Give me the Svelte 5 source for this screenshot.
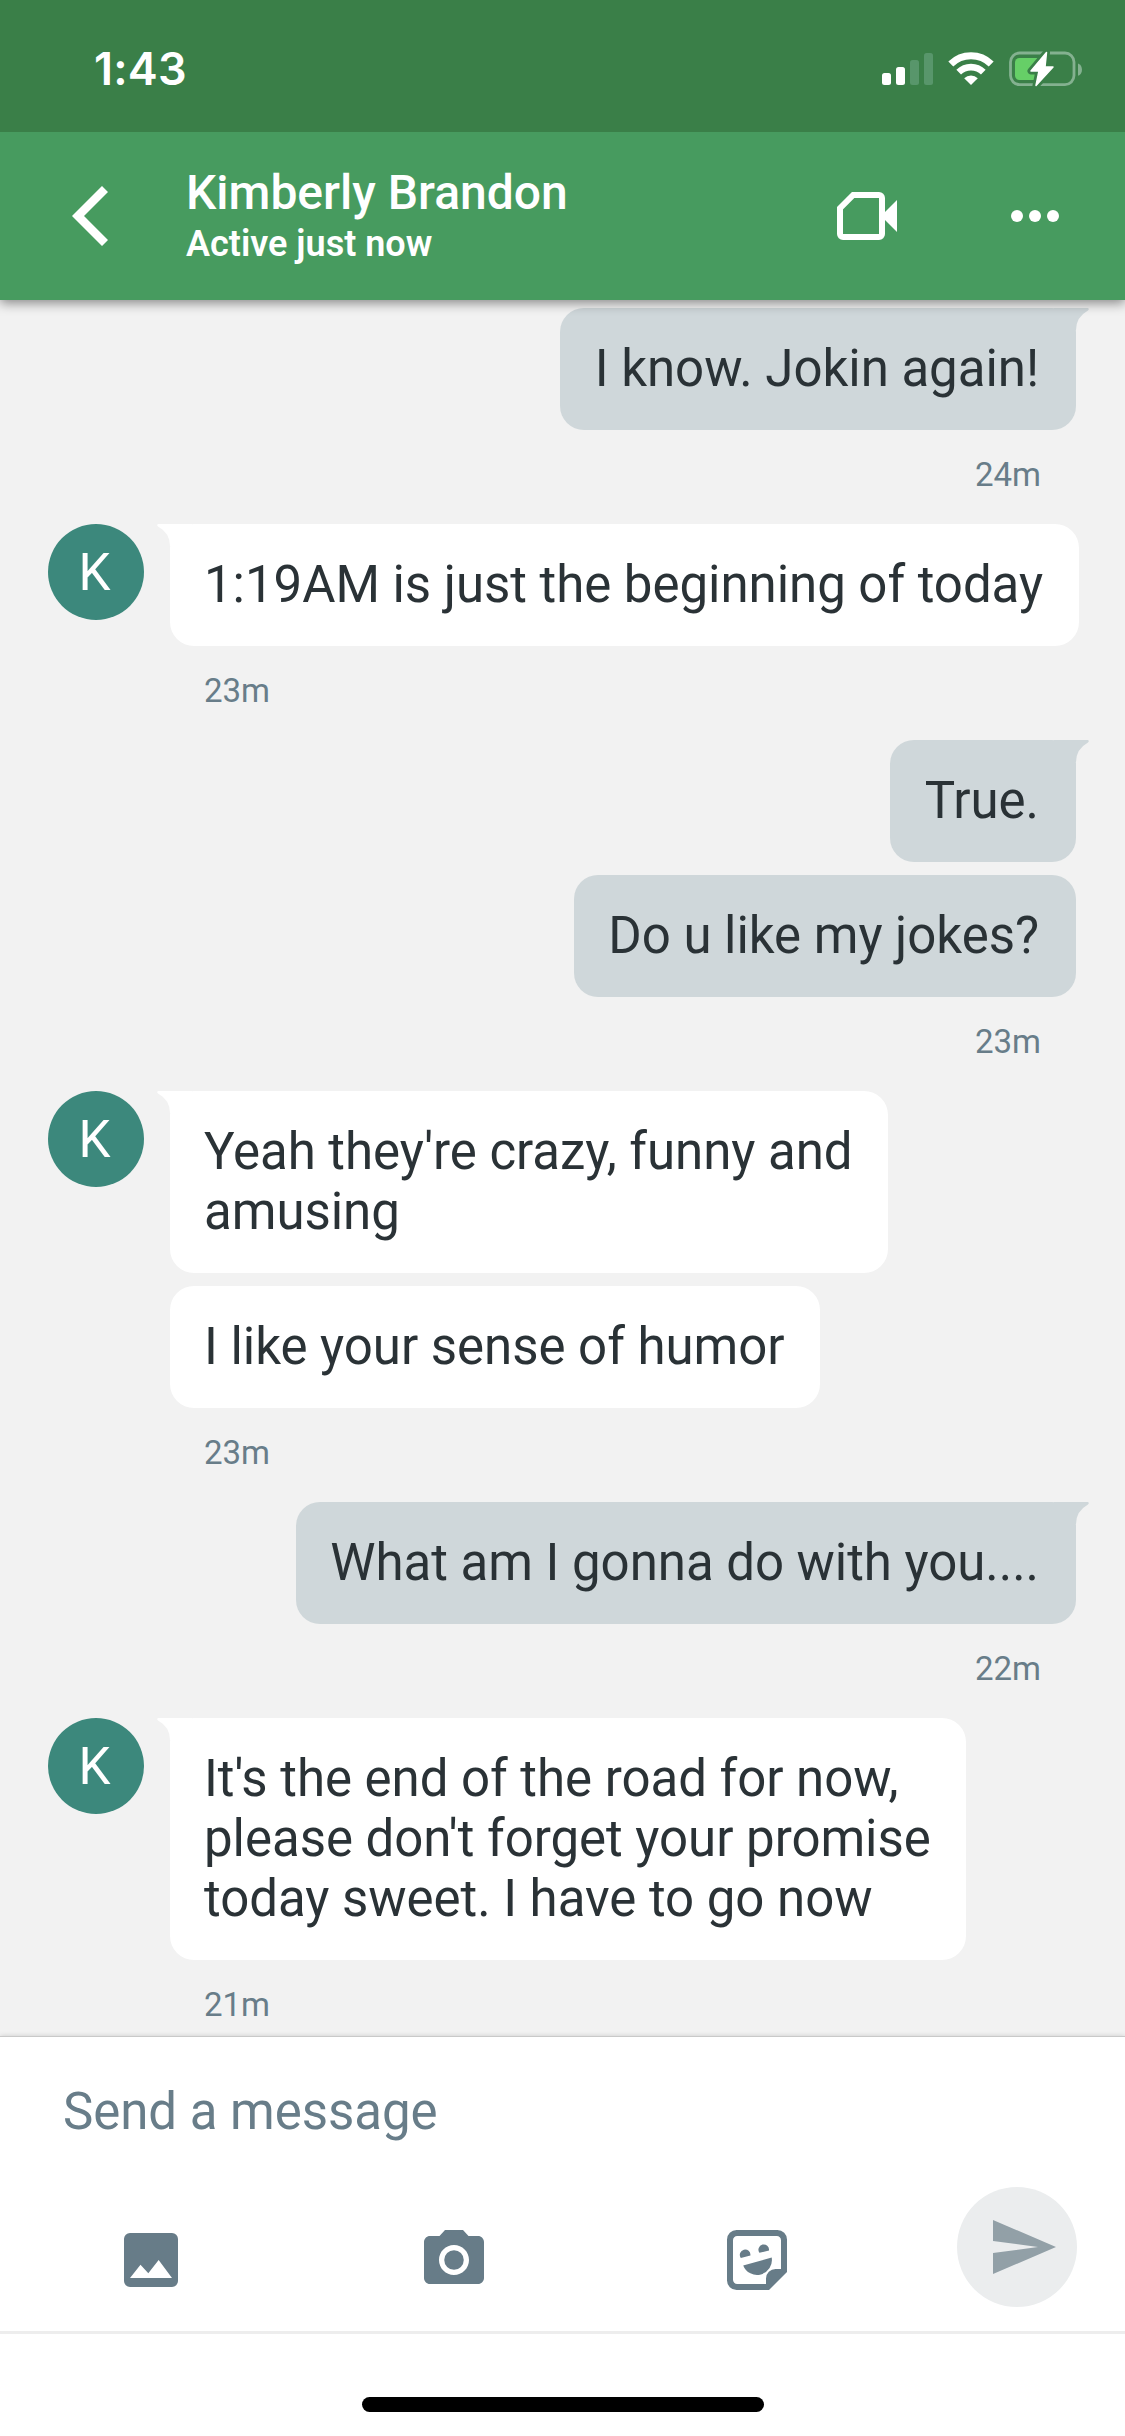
<script lang="ts">
	type Group = {
		mine: boolean;
		time: string;
		messages: string[];
	};

	const contact = { name: 'Kimberly Brandon', status: 'Active just now', initial: 'K' };

	const groups: Group[] = [
		{ mine: true, time: '24m', messages: ['I know. Jokin again!'] },
		{ mine: false, time: '23m', messages: ['1:19AM is just the beginning of today'] },
		{ mine: true, time: '23m', messages: ['True.', 'Do u like my jokes?'] },
		{
			mine: false,
			time: '23m',
			messages: ["Yeah they're crazy, funny and\namusing", 'I like your sense of humor']
		},
		{ mine: true, time: '22m', messages: ['What am I gonna do with you....'] },
		{
			mine: false,
			time: '21m',
			messages: [
				"It's the end of the road for now,\nplease don't forget your promise\ntoday sweet. I have to go now"
			]
		}
	];
</script>

<div class="screen">
	<div class="status">
		<span class="clock">1:43</span>
		<div class="indicators">
			<svg class="signal" width="51" height="32" viewBox="0 0 51 32" fill="#fff">
				<rect x="0" y="20" width="9" height="12" rx="2.5" />
				<rect x="14" y="14" width="9" height="18" rx="2.5" />
				<rect x="28" y="7" width="9" height="25" rx="2.5" fill="#58966b" />
				<rect x="42" y="0" width="9" height="32" rx="2.5" fill="#58966b" />
			</svg>
			<svg class="wifi" width="46" height="33" viewBox="0 0 46 33" fill="none" stroke="#fff">
				<path d="M2.8 12.1A28.8 28.8 0 0 1 43.2 12.1" stroke-width="7" />
				<path d="M10.7 20.2A17.4 17.4 0 0 1 35.3 20.2" stroke-width="6.6" />
				<path d="M16.2 26.3A9.8 9.8 0 0 1 29.8 26.3L23 33Z" fill="#fff" stroke="none" />
			</svg>
			<svg class="battery" width="74" height="36" viewBox="0 0 74 36">
				<rect x="1.5" y="2" width="63.5" height="31.6" rx="9" fill="none" stroke="#84b190" stroke-width="2.8" />
				<path d="M69 12.6c5.3 1.6 5.3 10.6 0 12.2z" fill="#84b190" />
				<rect x="6" y="7" width="28" height="22" rx="4.5" fill="#66cf67" />
				<path
					d="M37.5 1.5L22 20h8l-3 14.5L44 16h-8z"
					fill="#fff"
					stroke="#3a7f48"
					stroke-width="7"
					stroke-linejoin="round"
				/>
				<path
					d="M37.5 1.5L22 20h8l-3 14.5L44 16h-8z"
					fill="#fff"
					stroke="#fff"
					stroke-width="1.5"
					stroke-linejoin="round"
				/>
			</svg>
		</div>
	</div>

	<header>
		<svg class="back" width="36" height="60" viewBox="0 0 36 60" fill="none" stroke="#fff" stroke-width="8.5">
			<path d="M33 3L6 30l27 27" />
		</svg>
		<div class="contact">
			<h1>{contact.name}</h1>
			<p>{contact.status}</p>
		</div>
		<svg class="video" width="60" height="48" viewBox="0 0 60 48">
			<path
				d="M16.2 3H42a3 3 0 0 1 3 3v36a3 3 0 0 1-3 3H6a3 3 0 0 1-3-3V16.2z"
				fill="none"
				stroke="#fff"
				stroke-width="6"
			/>
			<path d="M48 20L60 8v32L48 28z" fill="#fff" />
		</svg>
		<svg class="more" width="48" height="12" viewBox="0 0 48 12" fill="#fff">
			<circle cx="6" cy="6" r="6" />
			<circle cx="24" cy="6" r="6" />
			<circle cx="42" cy="6" r="6" />
		</svg>
	</header>

	<main>
		{#each groups as group, g (g)}
			<section class="group" class:mine={group.mine}>
				{#if !group.mine}
					<div class="avatar">{contact.initial}</div>
				{/if}
				<div class="stack">
					{#each group.messages as message, i (i)}
						<div class="bubble">
							{#if i === 0}
								<svg class="tail" width="36" height="22" viewBox="0 0 36 22">
									<path d="M0 0H34.2Q35.6 1.2 34 2.4Q22 9 22 22H0z" />
								</svg>
							{/if}
							<div class="text">{message}</div>
						</div>
					{/each}
					<time>{group.time}</time>
				</div>
			</section>
		{/each}
	</main>

	<footer>
		<div class="placeholder">Send a message</div>
		<div class="tools">
			<svg width="72" height="72" viewBox="0 0 24 24">
				<path
					d="M5 3h14a2 2 0 0 1 2 2v14a2 2 0 0 1-2 2H5a2 2 0 0 1-2-2V5a2 2 0 0 1 2-2zM5 18h14l-4.45-6-3.45 4.4-2.6-2.85z"
					fill-rule="evenodd"
				/>
			</svg>
			<svg width="72" height="72" viewBox="0 0 24 24">
				<circle cx="12" cy="12" r="3.25" />
				<path
					d="M9 2L7.17 4H4c-1.1 0-2 .9-2 2v12c0 1.1.9 2 2 2h16c1.1 0 2-.9 2-2V6c0-1.1-.9-2-2-2h-3.17L15 2H9zm3 15c-2.76 0-5-2.24-5-5s2.24-5 5-5 5 2.24 5 5-2.24 5-5 5z"
				/>
			</svg>
			<svg width="72" height="72" viewBox="0 0 24 24">
				<path
					d="M5.2 2h13.6A3.2 3.2 0 0 1 22 5.2V16l-6 6H5.2A3.2 3.2 0 0 1 2 18.8V5.2A3.2 3.2 0 0 1 5.2 2zM5.4 4A1.4 1.4 0 0 0 4 5.4v13.2A1.4 1.4 0 0 0 5.4 20H15v-1.8A3.2 3.2 0 0 1 18.2 15H20V5.4A1.4 1.4 0 0 0 18.6 4z"
					fill-rule="evenodd"
				/>
				<path d="M6.6 11.3a1.77 1.77 0 1 1 3.2-.8zM12.8 9.6a1.77 1.77 0 1 1 3.2-.8z" />
				<path d="M7.4 13.8l9.5-2.6a4.95 4.95 0 0 1-9.5 2.6z" />
			</svg>
			<button class="send" aria-label="Send">
				<svg width="72" height="72" viewBox="0 0 24 24">
					<path d="M2 21L23 12 2 3v7l15 2-15 2z" />
				</svg>
			</button>
		</div>
		<div class="home"></div>
	</footer>
</div>

<style>
	:global(body) {
		background: #f2f2f2;
	}
	.screen {
		width: 1125px;
		height: 2436px;
		display: flex;
		flex-direction: column;
		overflow: hidden;
		background: #f2f2f2;
		font-family: Roboto, 'Liberation Sans', sans-serif;
		color: #2a3236;
	}
	svg {
		display: block;
		flex: none;
	}

	.status {
		position: relative;
		z-index: 2;
		box-sizing: border-box;
		height: 132px;
		flex: none;
		display: flex;
		justify-content: space-between;
		padding: 42px 42px 0 94px;
		background: #3a7f48;
		color: #fff;
	}
	.clock {
		font: 600 45px/54px Inter, sans-serif;
		letter-spacing: 0.2px;
	}
	.indicators {
		display: flex;
		padding-top: 9px;
	}
	.signal {
		margin-top: 2px;
	}
	.wifi {
		margin: 1px 15px 0;
	}

	header {
		position: relative;
		z-index: 1;
		box-sizing: border-box;
		height: 168px;
		flex: none;
		display: flex;
		align-items: center;
		padding: 0 66px 0 72px;
		background: #479b5f;
		color: #fff;
		box-shadow: 0 3px 11px rgb(0 0 0 / 0.45);
	}
	.contact {
		flex: 1;
		padding-left: 78px;
	}
	h1 {
		margin: 0;
		font-size: 48px;
		line-height: 56px;
		font-weight: 500;
	}
	.contact p {
		margin: 0;
		font-size: 36px;
		line-height: 46px;
		font-weight: 600;
	}
	.video {
		margin-right: 114px;
	}

	main {
		flex: 1;
		min-height: 0;
		padding-top: 8px;
		overflow: hidden;
	}
	.group {
		display: flex;
		padding: 0 48px 32px;
	}
	.group.mine {
		justify-content: flex-end;
	}
	.avatar {
		box-sizing: border-box;
		width: 96px;
		height: 96px;
		flex: none;
		margin-right: 25.5px;
		padding: 1px 3px 0 0;
		border-radius: 50%;
		background: #3c887c;
		color: #fff;
		font-size: 51px;
		line-height: 96px;
		text-align: center;
	}
	.stack {
		display: flex;
		flex-direction: column;
		align-items: flex-start;
	}
	.mine .stack {
		align-items: flex-end;
		padding-right: 1.5px;
	}
	.bubble {
		position: relative;
		padding: 30.5px 35.5px 31px 34.5px;
		border-radius: 24px;
		background: #fff;
	}
	.bubble + .bubble {
		margin-top: 13.5px;
	}
	.mine .bubble {
		padding-right: 36.5px;
		background: #cfd7da;
	}
	.text {
		font-size: 51px;
		line-height: 60px;
		letter-spacing: -0.04px;
		white-space: pre;
	}
	.tail {
		position: absolute;
		top: 0;
		left: -14px;
		fill: #fff;
		transform: scaleX(-1);
	}
	.mine .tail {
		left: auto;
		right: -14px;
		fill: #cfd7da;
		transform: none;
	}
	time {
		padding: 27px 34.5px 0;
		font-size: 33px;
		line-height: 35.5px;
		color: #687d89;
	}

	footer {
		position: relative;
		box-sizing: border-box;
		height: 400px;
		flex: none;
		display: flex;
		flex-direction: column;
		background: #fff;
		border-top: 1px solid #c9c9c9;
		box-shadow: 0 0 5px rgb(0 0 0 / 0.16);
	}
	.placeholder {
		padding: 45px 63px 0;
		font-size: 51px;
		line-height: 60px;
		letter-spacing: -0.04px;
		color: #687d89;
	}
	.tools {
		box-sizing: border-box;
		height: 192px;
		display: grid;
		grid-template-columns: 303px 303px 236px 120px;
		align-items: start;
		padding: 45px 48px 0 115px;
		border-bottom: 3px solid #ededed;
		fill: #677c88;
	}
	.tools > svg {
		margin-top: 37px;
	}
	.send {
		width: 120px;
		height: 120px;
		display: grid;
		place-items: center;
		padding: 0 0 0 12px;
		border: none;
		border-radius: 50%;
		background: #ebedee;
		fill: #92a0a7;
	}
	.home {
		width: 402px;
		height: 15px;
		margin: 63px auto 0;
		border-radius: 8px;
		background: #000;
	}
</style>
